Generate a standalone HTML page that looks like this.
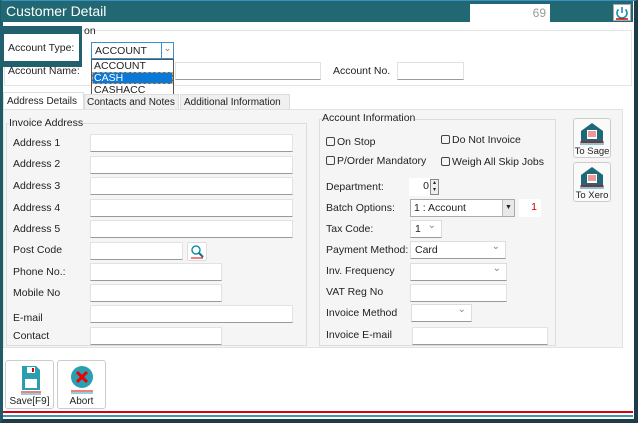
<!DOCTYPE html>
<html><head><meta charset="utf-8"><style>
*{box-sizing:border-box;margin:0;padding:0}
body{width:638px;height:423px;overflow:hidden;background:#fff;font-family:"Liberation Sans",sans-serif;font-size:11px;color:#222;position:relative}
.a{position:absolute;white-space:nowrap}
.in{position:absolute;background:#fff;border:1px solid #e2e2e2;border-bottom:1px solid #9a9a9a;height:18px}
.lb{position:absolute;white-space:nowrap;font-size:10.5px;color:#222}
.cb{position:absolute;background:#fff;border:1px solid #ddd;border-bottom:1px solid #999;height:18px;font-size:10.5px;padding:2px 4px}
.cb:after{content:"⌄";position:absolute;right:5px;top:-1px;color:#888;font-size:10px}
.chk{display:inline-block;width:9px;height:9px;border:1px solid #444;border-radius:2px;margin-right:2px;vertical-align:-1px}
.btn{position:absolute;border:1px solid #ccc;border-radius:3px;background:#fafafa;text-align:center;font-size:10px;white-space:nowrap;overflow:hidden}
</style></head><body>
<div class="a" style="left:0;top:0;width:638px;height:423px;border:1px solid #3a8fc4;border-right:4px solid #1e3c48;border-bottom:4px solid #1e3c48;border-left:3px solid #1e5a68"></div>
<div class="a" style="left:1px;top:1px;width:632px;height:21px;background:#226872"></div>
<div class="a" style="left:6px;top:3px;color:#fff;font-size:14px">Customer Detail</div>
<div class="a" style="left:470px;top:4px;width:80px;height:18px;background:#fff;text-align:right;color:#999;font-size:12px;padding:2px 4px">69</div>
<div class="a" style="left:613px;top:4px;width:18px;height:17px;background:#fff;border:1px solid #aaa"><svg width="16" height="15"><path d="M4.5 4.5a5 5 0 1 0 7 0" fill="none" stroke="#1a8fb0" stroke-width="1.6"/><path d="M8 2v6" stroke="#1a8fb0" stroke-width="1.6"/><path d="M2 14h12" stroke="#d00" stroke-width="1.5"/></svg></div>
<div class="a" style="left:4px;top:30px;width:628px;height:56px;border:1px solid #e4e4e4"></div>
<div class="lb" style="left:84px;top:25px">on</div>
<div class="lb" style="left:8px;top:65px">Account Name:</div>
<div class="in" style="left:175px;top:62px;width:146px"></div>
<div class="lb" style="left:333px;top:65px">Account No.</div>
<div class="in" style="left:397px;top:62px;width:67px"></div>
<div class="a" style="left:0;top:26px;width:82px;height:41px;background:#23606e"></div>
<div class="a" style="left:4px;top:34px;width:75px;height:27px;background:#fff"></div>
<div class="lb" style="left:8px;top:42px">Account Type:</div>
<div class="a" style="left:91px;top:42px;width:83px;height:17px;border:1px solid #3a8fd0;background:#fff;font-size:10.5px;padding:2px 3px">ACCOUNT<span style="position:absolute;right:0;top:0;width:12px;height:15px;border-left:1px solid #3a8fd0;color:#777;font-size:9px;text-align:center">⌄</span></div>
<div class="a" style="left:91px;top:59px;width:83px;height:38px;border:1px solid #555;background:#fff;font-size:10.5px;line-height:12px">
<div style="padding-left:2px">ACCOUNT</div><div style="padding-left:2px;background:#0a78d7;color:#fff;outline:1px dashed #e8a050;outline-offset:-1px">CASH</div><div style="padding-left:2px">CASHACC</div></div>
<div class="a" style="left:3px;top:92px;width:81px;height:18px;background:#fff;border:1px solid #ddd;border-bottom:none;font-size:10px;padding:3px 3px;overflow:hidden">Address Details</div>
<div class="a" style="left:84px;top:94px;width:95px;height:16px;background:#f0f0f0;border:1px solid #ddd;font-size:10px;padding:2px 2px;overflow:hidden">Contacts and Notes</div>
<div class="a" style="left:180px;top:94px;width:110px;height:16px;background:#f0f0f0;border:1px solid #ddd;font-size:10px;padding:2px 3px;overflow:hidden">Additional Information</div>
<div class="a" style="left:3px;top:109px;width:620px;height:239px;background:#f5f5f5;border:1px solid #e2e2e2"></div>
<div class="a" style="left:6px;top:123px;width:301px;height:223px;border:1px solid #ddd"></div>
<div class="lb" style="left:9px;top:117px;background:#f5f5f5">Invoice Address</div>
<div class="lb" style="left:13px;top:137px">Address 1</div><div class="in" style="left:90px;top:134px;width:203px"></div>
<div class="lb" style="left:13px;top:158px">Address 2</div><div class="in" style="left:90px;top:156px;width:203px"></div>
<div class="lb" style="left:13px;top:180px">Address 3</div><div class="in" style="left:90px;top:177px;width:203px"></div>
<div class="lb" style="left:13px;top:202px">Address 4</div><div class="in" style="left:90px;top:199px;width:203px"></div>
<div class="lb" style="left:13px;top:223px">Address 5</div><div class="in" style="left:90px;top:220px;width:203px"></div>
<div class="lb" style="left:13px;top:244px">Post Code</div><div class="in" style="left:90px;top:242px;width:93px"></div>
<div class="a" style="left:187px;top:242px;width:20px;height:19px;background:#fff;border:1px solid #ddd;border-radius:2px"><svg width="18" height="17"><circle cx="8" cy="7" r="4" fill="none" stroke="#1a8fb0" stroke-width="1.5"/><path d="M11 10l4 4" stroke="#1a6a80" stroke-width="2"/><path d="M3 15h12" stroke="#d00"/></svg></div>
<div class="lb" style="left:13px;top:266px">Phone No.:</div><div class="in" style="left:90px;top:263px;width:132px"></div>
<div class="lb" style="left:13px;top:287px">Mobile No</div><div class="in" style="left:90px;top:284px;width:132px"></div>
<div class="lb" style="left:13px;top:312px">E-mail</div><div class="in" style="left:90px;top:305px;width:203px"></div>
<div class="lb" style="left:13px;top:330px">Contact</div><div class="in" style="left:90px;top:327px;width:132px"></div>
<div class="a" style="left:319px;top:119px;width:237px;height:227px;border:1px solid #ddd"></div>
<div class="lb" style="left:322px;top:112px;background:#f5f5f5">Account Information</div>
<div class="lb" style="left:326px;top:136px"><span class="chk"></span>On Stop</div>
<div class="lb" style="left:441px;top:134px"><span class="chk"></span>Do Not Invoice</div>
<div class="lb" style="left:326px;top:155px"><span class="chk"></span>P/Order Mandatory</div>
<div class="lb" style="left:441px;top:156px"><span class="chk"></span>Weigh All Skip Jobs</div>
<div class="lb" style="left:326px;top:181px">Department:</div>
<div class="a" style="left:409px;top:178px;width:22px;height:18px;background:#fff;text-align:right;font-size:10.5px;padding:2px 2px">0</div>
<div class="a" style="left:430px;top:179px;width:9px;height:16px;border:1px solid #888;background:#eee;font-size:6px;line-height:7px;text-align:center">▴<br>▾</div>
<div class="lb" style="left:326px;top:202px">Batch Options:</div>
<div class="a" style="left:410px;top:199px;width:105px;height:18px;background:#fff;border:1px solid #aaa;font-size:10.5px;padding:2px 3px">1 : Account<span style="position:absolute;right:0;top:0;width:12px;height:16px;background:#e8e8e8;border-left:1px solid #bbb;font-size:7px;text-align:center;line-height:16px">▼</span></div>
<div class="a" style="left:519px;top:199px;width:22px;height:18px;background:#fff;color:#c00;text-align:right;padding:2px 4px;font-size:10.5px">1</div>
<div class="lb" style="left:326px;top:223px">Tax Code:</div>
<div class="cb" style="left:410px;top:220px;width:32px">1</div>
<div class="lb" style="left:326px;top:244px">Payment Method:</div>
<div class="cb" style="left:410px;top:241px;width:96px">Card</div>
<div class="lb" style="left:326px;top:265px">Inv. Frequency</div>
<div class="cb" style="left:410px;top:263px;width:97px"></div>
<div class="lb" style="left:326px;top:286px">VAT Reg No</div>
<div class="in" style="left:410px;top:284px;width:97px"></div>
<div class="lb" style="left:326px;top:307px">Invoice Method</div>
<div class="cb" style="left:411px;top:304px;width:61px"></div>
<div class="lb" style="left:326px;top:329px">Invoice E-mail</div>
<div class="in" style="left:412px;top:327px;width:136px"></div>
<div class="btn" style="left:573px;top:118px;width:38px;height:40px;font-size:9.5px"><svg width="30" height="26" style="margin-top:1px;display:block;margin-left:3px"><path d="M4 11L15 3l11 8v12H4z" fill="#1e6878"/><rect x="10" y="10" width="10" height="9" fill="#fff"/><path d="M11 12h8M11 14h8M11 16h8" stroke="#d33" stroke-width="1"/><path d="M3 22h24" stroke="#d00"/><path d="M3 24h24" stroke="#1a8fb0"/></svg><div style="margin-top:0">To Sage</div></div>
<div class="btn" style="left:573px;top:162px;width:38px;height:40px;font-size:9.5px"><svg width="30" height="26" style="margin-top:1px;display:block;margin-left:3px"><path d="M4 11L15 3l11 8v12H4z" fill="#1e6878"/><rect x="10" y="10" width="10" height="9" fill="#fff"/><path d="M11 12h8M11 14h8M11 16h8" stroke="#d33" stroke-width="1"/><path d="M3 22h24" stroke="#d00"/><path d="M3 24h24" stroke="#1a8fb0"/></svg><div style="margin-top:0">To Xero</div></div>
<div class="btn" style="left:5px;top:360px;width:49px;height:49px;background:#fff"><svg width="30" height="32" style="margin-top:3px"><path d="M7 2h14l4 4v20H7z" fill="#2a9fb0"/><rect x="12" y="3" width="8" height="6" fill="#fff"/><rect x="17" y="4" width="2" height="4" fill="#d00"/><rect x="10" y="15" width="12" height="9" fill="#fff"/><path d="M6 28h20" stroke="#d00"/><path d="M6 30h20" stroke="#2a9fb0"/></svg><div style="margin-top:-3px">Save[F9]</div></div>
<div class="btn" style="left:57px;top:360px;width:49px;height:49px;background:#fff"><svg width="30" height="32" style="margin-top:3px"><circle cx="15" cy="13" r="11" fill="#2a9fb0"/><path d="M10 8l10 10M20 8L10 18" stroke="#e00" stroke-width="3"/><path d="M4 27h22" stroke="#d00"/><path d="M4 29h22" stroke="#2a9fb0"/></svg><div style="margin-top:-3px">Abort</div></div>
<div class="a" style="left:3px;top:411px;width:630px;height:2px;background:#d80010"></div>
<div class="a" style="left:3px;top:415px;width:630px;height:2px;background:#3a9aa8"></div>
</body></html>
